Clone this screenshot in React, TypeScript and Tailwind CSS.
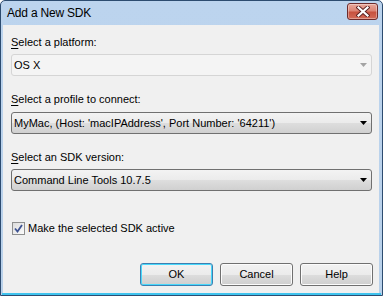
import React from "react";

function Arrow({ disabled }: { disabled?: boolean }) {
  return (
    <svg width="7" height="4" viewBox="0 0 7 4" className="mr-[4px]">
      <path d="M0 0H7L3.5 4Z" fill={disabled ? "#a3a3a3" : "#000000"} />
    </svg>
  );
}

function Combo({ value, disabled }: { value: string; disabled?: boolean }) {
  return (
    <div
      className={
        disabled
          ? "flex h-[22px] w-[361px] items-center justify-between rounded-[3px] border border-[#d5d5d5] bg-[#f4f4f4] pl-[2px]"
          : "flex h-[22px] w-[361px] items-center justify-between rounded-[3px] border border-[#707070] bg-[linear-gradient(to_bottom,#f3f3f3_0%,#ebebeb_50%,#dedede_50%,#d0d0d0_100%)] pl-[2px]"
      }
    >
      <span className="whitespace-nowrap text-black">{value}</span>
      <Arrow disabled={disabled} />
    </div>
  );
}

function Label({ text, mt }: { text: string; mt: string }) {
  return (
    <div className={`${mt} h-[13px] leading-[13px] text-black`}>
      <span className="underline underline-offset-[2px]">{text[0]}</span>
      {text.slice(1)}
    </div>
  );
}

function Button({ label, focused }: { label: string; focused?: boolean }) {
  return (
    <div
      className={
        focused
          ? "flex h-[23px] w-[73px] items-center justify-center rounded-[3px] border border-[#3c7fb1] bg-[linear-gradient(to_bottom,#f2f2f2_0%,#ebebeb_50%,#dddddd_50%,#cfcfcf_100%)] shadow-[inset_0_0_0_1px_#48d8fb]"
          : "flex h-[23px] w-[73px] items-center justify-center rounded-[3px] border border-[#707070] bg-[linear-gradient(to_bottom,#f2f2f2_0%,#ebebeb_50%,#dddddd_50%,#cfcfcf_100%)] shadow-[inset_0_0_0_1px_#fcfcfc]"
      }
    >
      {label}
    </div>
  );
}

export default function App() {
  return (
    <div className="h-[296px] w-[383px] bg-white font-['Liberation_Sans',Arial,sans-serif] text-[11px]">
      <div className="flex h-[296px] w-[383px] flex-col rounded-t-[5px] border border-[#2d4c70] bg-[linear-gradient(to_bottom,#bcd4ee,#b9d1ea)]">
        {/* Title bar */}
        <div className="flex h-[24px] items-center justify-between pl-[6px] pr-[4px]">
          <span className="text-[12px] tracking-[-0.2px] text-black">Add a New SDK</span>
          <div className="mt-[-3px] flex h-[17px] w-[31px] items-center justify-center rounded-[3px] border border-[#6d2b2b] bg-[linear-gradient(to_bottom,#e9a99c_0%,#dc8575_45%,#c7523f_55%,#d36b57_100%)] shadow-[inset_0_0_0_1px_rgba(255,255,255,0.35)]">
            <svg width="14" height="11" viewBox="0 0 14 11">
              <path d="M2.5 1.5L11.5 9.5M11.5 1.5L2.5 9.5" stroke="#5a2020" strokeWidth="4" strokeLinecap="square" />
              <path d="M2.5 1.5L11.5 9.5M11.5 1.5L2.5 9.5" stroke="#ffffff" strokeWidth="2.2" strokeLinecap="square" />
            </svg>
          </div>
        </div>

        {/* Client area */}
        <div className="flex pl-[2px] pr-[3px]">
          <div className="flex h-[268px] w-[376px] flex-col bg-[#f0f0f0] pl-[8px]">
            <Label text="Select a platform:" mt="mt-[11px]" />
            <div className="mt-[5px]">
              <Combo value="OS X" disabled />
            </div>
            <Label text="Select a profile to connect:" mt="mt-[17px]" />
            <div className="mt-[6px]">
              <Combo value="MyMac, (Host: 'macIPAddress', Port Number: '64211')" />
            </div>
            <Label text="Select an SDK version:" mt="mt-[17px]" />
            <div className="mt-[5px]">
              <Combo value="Command Line Tools 10.7.5" />
            </div>

            <div className="mt-[31px] flex h-[13px] items-center gap-[3px] pl-[1px]">
              <div className="flex h-[13px] w-[13px] items-center justify-center border border-[#8e8f8f] bg-[linear-gradient(to_bottom_right,#dcdcdc,#fbfbfb)]">
                <svg width="9" height="9" viewBox="0 0 9 9">
                  <path d="M1 4.5L3.5 7.5L8 1" fill="none" stroke="#3d5291" strokeWidth="1.8" />
                </svg>
              </div>
              <span className="text-black">Make the selected SDK active</span>
            </div>

            <div className="mt-[28px] flex justify-end gap-[7px] pr-[6px]">
              <Button label="OK" focused />
              <Button label="Cancel" />
              <Button label="Help" />
            </div>
          </div>
        </div>

        {/* Bottom frame */}
        <div className="mx-[1px] h-[2px] bg-[#3fc3ee]" />
      </div>
    </div>
  );
}
